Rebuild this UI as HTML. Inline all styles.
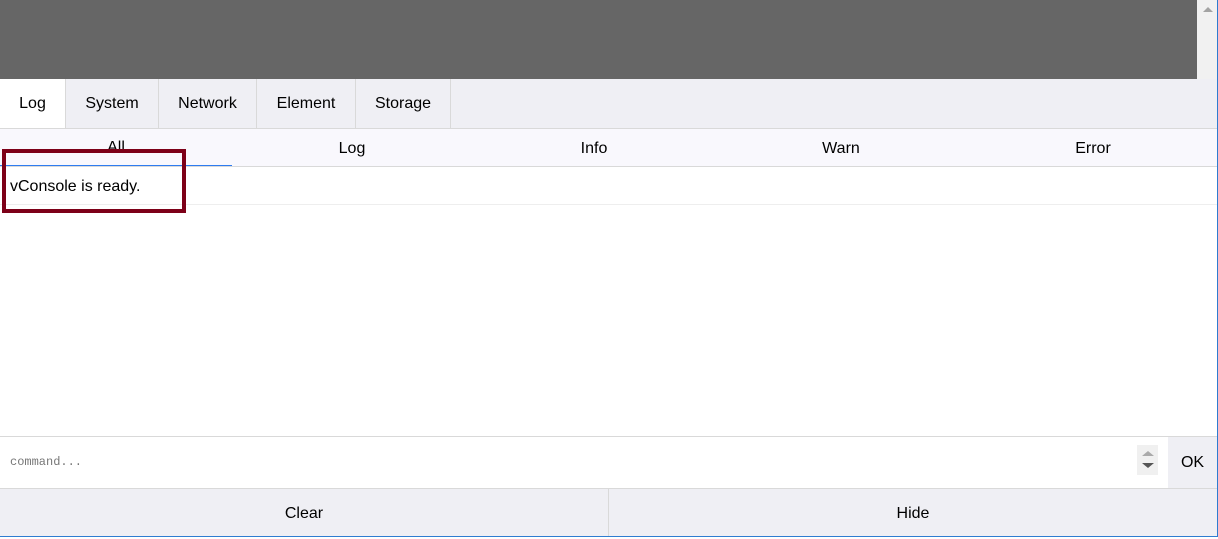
<html><head><style>
body{margin:0;width:1218px;height:537px;overflow:hidden;font-family:"Liberation Sans",sans-serif;font-size:16px;color:#000;background:#fff;position:relative}
div{position:absolute;box-sizing:border-box}
.t{top:79px;height:49px;line-height:49px;text-align:center;border-right:1px solid #d9d9d9}
.f{top:129px;height:37px;line-height:37px;text-align:center;width:120px;margin-left:-60px}
</style></head><body>
<div style="left:0;top:0;width:1197px;height:79px;background:#666"></div>
<div style="left:1197px;top:0;width:20px;height:79px;background:#f1f1f1"></div>
<div style="left:1203px;top:7px;width:0;height:0;border-left:5px solid transparent;border-right:5px solid transparent;border-bottom:5px solid #a3a3a3"></div>
<div style="left:0;top:79px;width:1217px;height:50px;background:#efeff4;border-bottom:1px solid #d9d9d9"></div>
<div class="t" style="left:0;width:66px;background:#fff">Log</div>
<div class="t" style="left:66px;width:93px">System</div>
<div class="t" style="left:159px;width:98px">Network</div>
<div class="t" style="left:257px;width:99px">Element</div>
<div class="t" style="left:356px;width:95px">Storage</div>
<div style="left:0;top:129px;width:1217px;height:38px;background:#f9f8fd;border-bottom:1px solid #d9d9d9"></div>
<div style="left:0;top:165px;width:232px;height:1px;background:#2e7cf0"></div>
<div class="f" style="left:116px">All</div>
<div class="f" style="left:352px;top:130px">Log</div>
<div class="f" style="left:594px;top:130px">Info</div>
<div class="f" style="left:841px;top:130px">Warn</div>
<div class="f" style="left:1093px;top:130px">Error</div>
<div style="left:0;top:167px;width:1217px;height:38px;border-bottom:1px solid #eee;line-height:39px;padding-left:10px">vConsole is ready.</div>
<div style="left:2px;top:149px;width:184px;height:64px;border:4px solid #7d0018"></div>
<div style="left:0;top:436px;width:1217px;height:53px;border-top:1px solid #d9d9d9;border-bottom:1px solid #d9d9d9"></div>
<div style="left:10px;top:455px;font-family:'Liberation Mono',monospace;font-size:12px;color:#777">command...</div>
<div style="left:1137px;top:445px;width:21px;height:30px;background:#f0f0f0"></div>
<div style="left:1142px;top:451px;width:0;height:0;border-left:6px solid transparent;border-right:6px solid transparent;border-bottom:5px solid #aaa"></div>
<div style="left:1142px;top:463px;width:0;height:0;border-left:6px solid transparent;border-right:6px solid transparent;border-top:5px solid #555"></div>
<div style="left:1168px;top:437px;width:49px;height:51px;background:#efeff4;line-height:51px;text-align:center">OK</div>
<div style="left:0;top:489px;width:1217px;height:47px;background:#efeff4"></div>
<div style="left:0;top:489px;width:609px;height:47px;line-height:50px;text-align:center;border-right:1px solid #d9d9d9">Clear</div>
<div style="left:609px;top:489px;width:608px;height:47px;line-height:50px;text-align:center">Hide</div>
<div style="left:1217px;top:0;width:1px;height:537px;background:#2e7cd0"></div>
<div style="left:0;top:536px;width:1218px;height:1px;background:#2e7cd0"></div>
</body></html>
